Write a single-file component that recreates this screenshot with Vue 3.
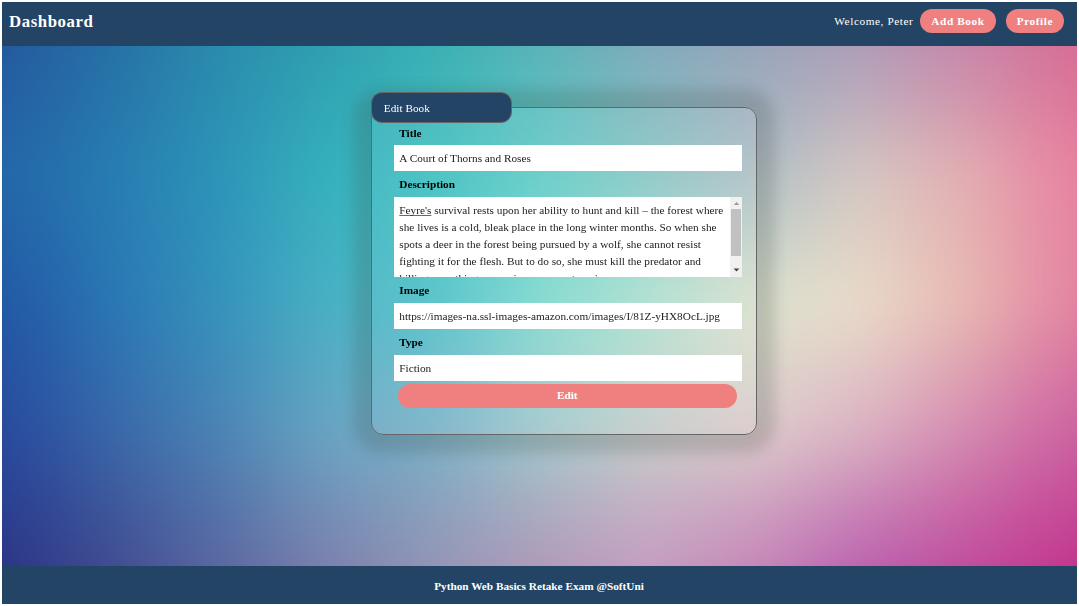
<script setup>
import { ref } from 'vue'

const title = ref('A Court of Thorns and Roses')
const image = ref('https://images-na.ssl-images-amazon.com/images/I/81Z-yHX8OcL.jpg')
const type = ref('Fiction')
</script>

<template>
  <div class="page">
    <header class="header">
      <h1>Dashboard</h1>
      <nav>
        <span class="welcome">Welcome, Peter</span>
        <a class="pill">Add Book</a>
        <a class="pill">Profile</a>
      </nav>
    </header>

    <main class="main">
      <div class="mesh">
        <i class="band b1"></i>
        <i class="band b2"></i>
        <i class="band b3"></i>
        <i class="band b4"></i>
        <i class="band b5"></i>
        <i class="band soften"></i>
      </div>
      <form class="card" @submit.prevent>
        <div class="legend">Edit Book</div>
        <label>Title</label>
        <input v-model="title" type="text" spellcheck="false" />
        <label>Description</label>
        <div class="area">
          <div class="copy"><p><span class="typo">Feyre's</span> survival rests upon her ability to hunt and kill – the forest where</p><p>she lives is a cold, bleak place in the long winter months. So when she</p><p>spots a deer in the forest being pursued by a wolf, she cannot resist</p><p>fighting it for the flesh. But to do so, she must kill the predator and</p><p class="last">killing something so precious comes at a price.</p></div>
          <div class="scroll">
            <svg width="11" height="12" viewBox="0 0 11 12"><path d="M2.8 7.9 5.5 5.1 8.2 7.9Z" fill="#9a9a9a" /></svg>
            <div class="thumb"></div>
            <svg class="down" width="11" height="12" viewBox="0 0 11 12"><path d="M2.6 3.6 5.5 6.6 8.4 3.6Z" fill="#444" /></svg>
          </div>
        </div>
        <label>Image</label>
        <input v-model="image" type="text" spellcheck="false" />
        <label>Type</label>
        <input v-model="type" type="text" spellcheck="false" />
        <button>Edit</button>
      </form>
    </main>

    <footer class="footer">Python Web Basics Retake Exam @SoftUni</footer>
  </div>
</template>

<style>
body {
  background: #fff;
}
</style>

<style scoped>
.page {
  box-sizing: border-box;
  width: 1079px;
  height: 606px;
  padding: 2px;
  display: flex;
  flex-direction: column;
  overflow: hidden;
  font-family: 'Liberation Serif', 'Times New Roman', serif;
  font-size: 11.27px;
}
.header {
  height: 44px;
  flex: none;
  box-sizing: border-box;
  display: flex;
  justify-content: space-between;
  padding: 7.4px 12.8px 0 7px;
  background: #234465;
  color: #fff;
  letter-spacing: 0.58px;
}
h1 {
  margin: 0;
  font-size: 16.8px;
  line-height: 25px;
}
nav {
  display: flex;
  height: 24px;
  line-height: 24px;
}
.welcome {
  margin-right: 6.8px;
}
.pill {
  padding: 0 11.1px;
  border-radius: 12px;
  background: #f08080;
  font-weight: bold;
}
.pill + .pill {
  margin-left: 10px;
}
.main {
  position: relative;
  height: 520px;
  flex: none;
  display: flex;
  justify-content: center;
  align-items: flex-start;
  overflow: hidden;
}
/* Colour mesh: horizontal gradients cross-faded from top to bottom */
.mesh,
.band {
  position: absolute;
  inset: 0;
}
.b1 {
  background: linear-gradient(90deg, #25599e, #2770a6 10%, #2b8bac 20%, #2f9fb0 30%, #3bb0b4 40%, #5ab3b8 50%, #80aaba 60%, #97a4ba 70%, #ad9bb8 80%, #c785a9 90%, #d86c94);
}
.b2 {
  background: linear-gradient(90deg, #2467a8, #277db2 10%, #2d94b8 20%, #36b1be 30%, #3cc0c0 40%, #60cdc7 50%, #88c8c6 60%, #b0c0c6 70%, #d6c8c2 80%, #e4aeb2 90%, #e8809f);
  mask-image: linear-gradient(transparent, #000 25%);
}
.b3 {
  background: linear-gradient(90deg, #2356a4, #2a76b4 10%, #3592bc 20%, #4ab0c4 30%, #4cc0c8 40%, #80dacf 50%, #aee3d2 60%, #dde4cf 70%, #eadcca 80%, #e8b8b2 90%, #e2809f);
  mask-image: linear-gradient(transparent 25%, #000 50%);
}
.b4 {
  background: linear-gradient(90deg, #28489c, #3a66a8 10%, #4c82b4 20%, #6aa4c2 30%, #7cb0c8 40%, #a4c8cc 50%, #c8ccca 60%, #dccacb 70%, #dab0c2 80%, #d488b0 90%, #cb5fa0);
  mask-image: linear-gradient(transparent 50%, #000 75%);
}
.b5 {
  background: linear-gradient(90deg, #2b3585, #414a90 10%, #5a66a0 20%, #7c7eac 30%, #9494b4 40%, #b098b8 50%, #c49cc0 60%, #c484b8 70%, #ba5fae 80%, #bf4a9c 90%, #c2348c);
  mask-image: linear-gradient(transparent 75%, #000);
}
.soften {
  backdrop-filter: blur(24px);
}
.card {
  position: relative;
  box-sizing: border-box;
  width: 386px;
  height: 328px;
  margin: 61px 0 0 49px;
  padding: 0 14px 0 22px;
  border: 1.4px solid #666;
  border-radius: 12px;
  background: rgba(255, 255, 255, 0.08);
  box-shadow: 0 0 14px 18px rgba(60, 65, 60, 0.2);
  display: flex;
  flex-direction: column;
}
.legend {
  box-sizing: border-box;
  width: 141px;
  height: 31px;
  flex: none;
  margin: -16px 0 0 -23px;
  padding-left: 11.8px;
  border: 1.4px solid #666;
  border-radius: 11px;
  background: #234465;
  color: #fff;
  line-height: 31px;
}
label {
  height: 26px;
  flex: none;
  padding-left: 5.3px;
  font-weight: bold;
  line-height: 27px;
  color: #000;
}
.legend + label {
  height: 22px;
  line-height: 20px;
}
input {
  box-sizing: border-box;
  width: 100%;
  height: 26px;
  flex: none;
  margin: 0;
  padding: 0 5.3px 1px;
  border: 0;
  background: #fff;
  font: inherit;
  color: #222;
  outline: none;
}
.area {
  height: 80px;
  flex: none;
  display: flex;
  background: #fff;
  color: #222;
  overflow: hidden;
}
.copy {
  flex: 1;
  padding: 5px 0 0 5.3px;
  white-space: nowrap;
}
p {
  margin: 0;
  line-height: 16.85px;
}
.last {
  padding-top: 1px;
}
.typo {
  text-decoration: underline 1px #f03030;
  text-decoration-skip-ink: none;
  text-underline-offset: 1px;
}
.scroll {
  width: 12px;
  display: flex;
  flex-direction: column;
  align-items: center;
  background: #f1f1f1;
}
.thumb {
  width: 10px;
  height: 47px;
  background: #c1c1c1;
}
.down {
  margin-top: auto;
}
button {
  height: 23.5px;
  flex: none;
  margin: 3px 5.5px 0 4px;
  padding: 0;
  border: 0;
  border-radius: 12px;
  background: #f08080;
  color: #fff;
  font: bold 11.27px/23px 'Liberation Serif', 'Times New Roman', serif;
}
.footer {
  height: 38px;
  flex: none;
  background: #234465;
  color: #fff;
  font-weight: bold;
  line-height: 41px;
  text-align: center;
  text-indent: -1px;
}
</style>
